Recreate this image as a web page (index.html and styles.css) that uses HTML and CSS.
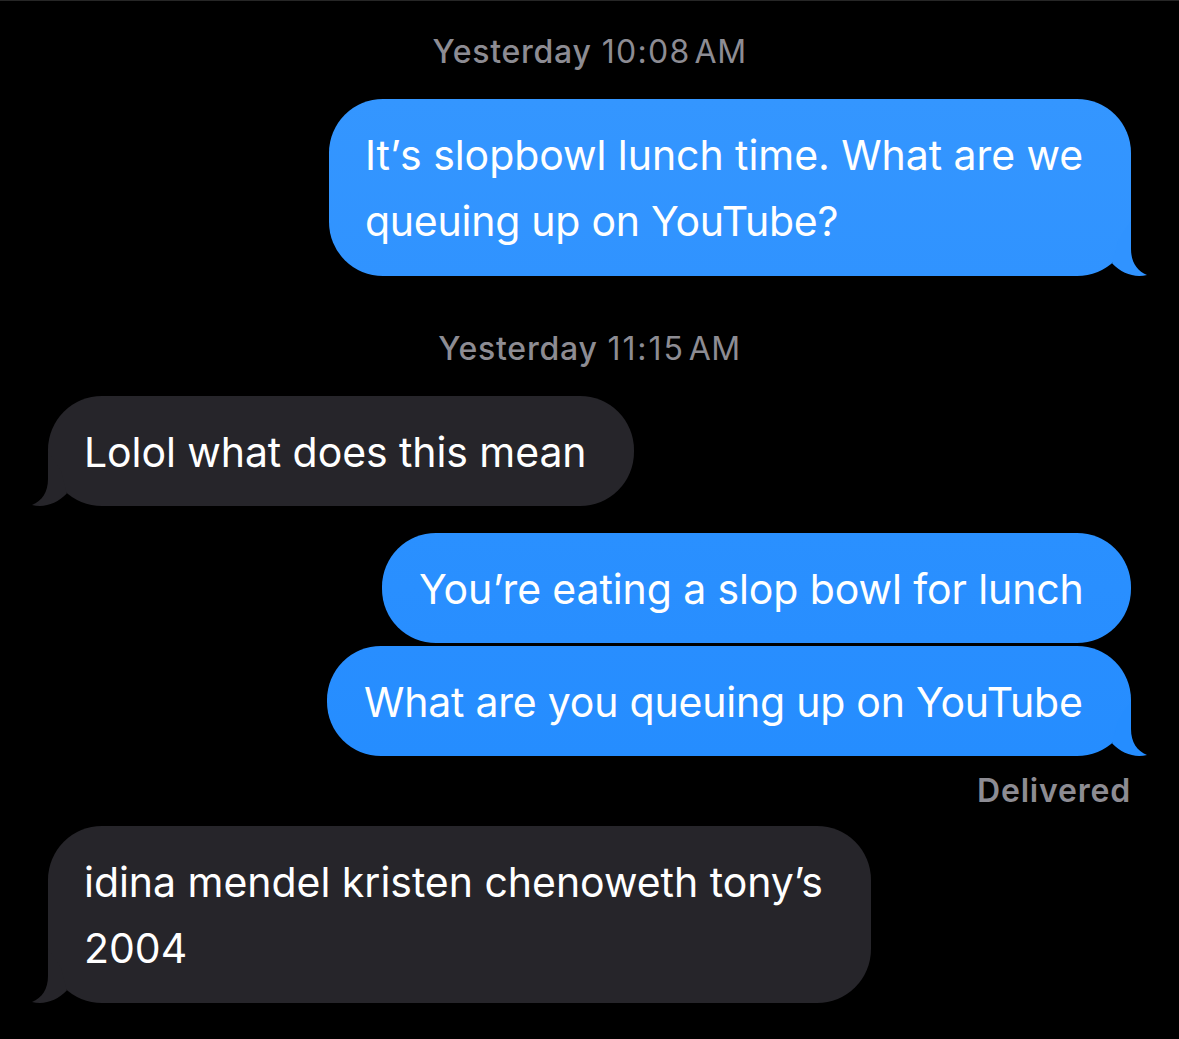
FILE: index.html
```html
<!DOCTYPE html>
<html lang="en">
<head>
    <meta charset="UTF-8">
    <meta name="viewport" content="width=device-width, initial-scale=1.0">
    <title>Messages</title>
    <link rel="stylesheet" href="styles.css">
</head>
<body>
    <main class="chat">
        <div class="timestamp"><span class="day">Yesterday</span><span class="time">10:08</span><span class="period">AM</span></div>

        <div class="message sent first">
            <p class="text">It<span class="apostrophe">’</span>s slopbowl lunch time. What are we<br><span class="second-line">queuing up on YouTube?</span></p>
            <svg class="tail" viewBox="0 0 40 55"><path d="M10 20 L23 0 V28 C23 41 29 50 39 54 C27 57 14 53 4.2 42.6 Z"/></svg>
        </div>

        <div class="timestamp later"><span class="day">Yesterday</span><span class="time">11:15</span><span class="period">AM</span></div>

        <div class="message received question">
            <p class="text">Lolol what does this mean</p>
            <svg class="tail" viewBox="0 0 40 55"><path d="M10 20 L23 0 V28 C23 41 29 50 39 54 C27 57 14 53 4.2 42.6 Z"/></svg>
        </div>

        <div class="message sent answer">
            <p class="text">You’re eating a slop bowl for lunch</p>
        </div>

        <div class="message sent followup">
            <p class="text">What are you queuing up on YouTube</p>
            <svg class="tail" viewBox="0 0 40 55"><path d="M10 20 L23 0 V28 C23 41 29 50 39 54 C27 57 14 53 4.2 42.6 Z"/></svg>
        </div>

        <div class="status">Delivered</div>

        <div class="message received reply">
            <p class="text">idina mendel kristen chenoweth tony’s<br>2004</p>
            <svg class="tail" viewBox="0 0 40 55"><path d="M10 20 L23 0 V28 C23 41 29 50 39 54 C27 57 14 53 4.2 42.6 Z"/></svg>
        </div>
    </main>
</body>
</html>
```
FILE: styles.css
```css
* {
    margin: 0;
    padding: 0;
    box-sizing: border-box;
}

body {
    background-color: #000;
    font-family: Inter, "Liberation Sans", sans-serif;
    min-height: 100vh;
}

.chat {
    display: flex;
    flex-direction: column;
    min-height: 100vh;
    padding: 31px 48px 0;
    border-top: 1px solid #262626;
}

/* Timestamps */
.timestamp {
    display: flex;
    justify-content: center;
    height: 40px;
    line-height: 40px;
    font-size: 32px;
    color: #8d8c93;
    white-space: nowrap;
}

.later {
    margin-top: 53px;
}

.day {
    margin-right: 10px;
    font-weight: 500;
    letter-spacing: 0.75px;
}

.time {
    margin-right: 4px;
    letter-spacing: 1.3px;
}

.later .time {
    letter-spacing: 1.9px;
}

.period {
    letter-spacing: 0.5px;
}

/* Bubbles */
.message {
    position: relative;
    padding: 23px 0 21px 36px;
    border-radius: 54px;
    color: #fff;
}

.text {
    font-size: 41px;
    line-height: 66px;
    white-space: nowrap;
}

.sent {
    align-self: flex-end;
}

.received {
    align-self: flex-start;
    background-color: #26252a;
}

.first {
    width: 802px;
    height: 177px;
    margin-top: 27px;
    letter-spacing: -0.06px;
    background: linear-gradient(#3496ff, #3093ff);
}

.apostrophe {
    letter-spacing: -0.5px;
}

.second-line {
    letter-spacing: -0.25px;
}

.question {
    width: 586px;
    height: 110px;
    margin-top: 27px;
    letter-spacing: -0.08px;
}

.answer {
    width: 749px;
    height: 110px;
    margin-top: 27px;
    padding-left: 37px;
    letter-spacing: -0.11px;
    background: linear-gradient(#2a90ff, #288eff);
}

.followup {
    width: 804px;
    height: 110px;
    margin-top: 3px;
    padding-left: 37px;
    letter-spacing: -0.22px;
    background: linear-gradient(#288eff, #258dff);
}

.reply {
    width: 823px;
    height: 177px;
    margin-top: 15px;
    letter-spacing: -0.03px;
}

/* Bubble tails */
.tail {
    position: absolute;
    bottom: 0;
    width: 40px;
    height: 55px;
}

.sent .tail {
    right: -17px;
}

.received .tail {
    left: -17px;
    transform: scaleX(-1);
    fill: #26252a;
}

.first .tail {
    fill: #3093ff;
}

.followup .tail {
    fill: #258dff;
}

.status {
    align-self: flex-end;
    height: 40px;
    margin-top: 15px;
    line-height: 40px;
    font-size: 32px;
    font-weight: 600;
    letter-spacing: 0.8px;
    color: #8d8c93;
}
```
